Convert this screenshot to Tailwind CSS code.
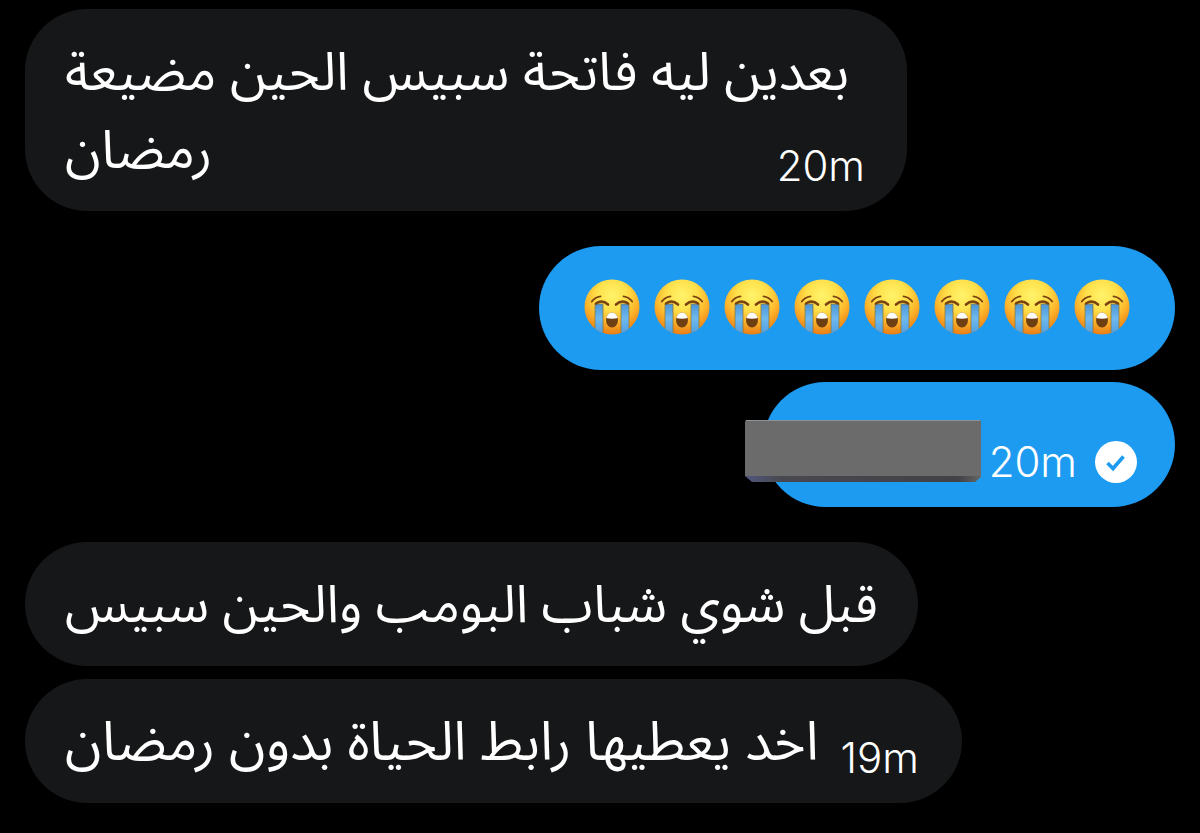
<!DOCTYPE html>
<html lang="ar">
<head>
<meta charset="utf-8">
<meta name="viewport" content="width=device-width, initial-scale=1">
<title>Messages</title>
<script src="https://cdn.jsdelivr.net/npm/@tailwindcss/browser@4"></script>
</head>
<body class="bg-black text-white">
<svg class="absolute size-0" aria-hidden="true">
  <defs>
    <radialGradient id="face" cx="0.5" cy="0.28" r="0.7">
      <stop offset="0" stop-color="#fff36b"/><stop offset="0.4" stop-color="#ffe04a"/><stop offset="0.7" stop-color="#fdb42a"/><stop offset="1" stop-color="#ea8217"/>
    </radialGradient>
    <linearGradient id="tear" x1="0" y1="0" x2="0" y2="1">
      <stop offset="0" stop-color="#4b95d6"/><stop offset="0.45" stop-color="#6fb9ee"/><stop offset="1" stop-color="#4a9ae0"/>
    </linearGradient>
    <clipPath id="round"><circle cx="28" cy="28" r="27.5"/></clipPath>
    <clipPath id="lips"><ellipse cx="28" cy="41" rx="6" ry="7.5"/></clipPath>
    <symbol id="sob" viewBox="0 0 56 56">
      <circle cx="28" cy="28" r="27.5" fill="url(#face)"/>
      <g clip-path="url(#round)" fill="url(#tear)" stroke="#8a7a3c" stroke-width="0.8">
        <path d="M11 25h8v32h-8zM37 25h8v32h-8z"/>
      </g>
      <g fill="none" stroke="#7a4210" stroke-linecap="round">
        <path stroke-width="1.8" d="M7.8 22.5Q11 18 16.5 17.3M48.2 22.5Q45 18 39.5 17.3"/>
        <path stroke-width="2.6" d="M12 24.5Q18 20 24 25.5M44 24.5Q38 20 32 25.5"/>
      </g>
      <ellipse cx="28" cy="41" rx="6" ry="7.5" fill="#6f3f14"/>
      <path clip-path="url(#lips)" fill="#fff" d="M22 33h12v6q-6 1.500-12 0z"/>
    </symbol>
  </defs>
</svg>
<main class="flex flex-col gap-[35px] px-[25px] pt-[9px] font-['Noto_Sans_Arabic',serif] leading-[78px]">
  <article class="w-fit max-w-[882px] rounded-[62px] bg-[#161718] pt-[25px] pr-[42px] pb-[21px] pl-10">
    <p dir="rtl" class="text-left text-[53px]">بعدين ليه فاتحة سبيس الحين مضيعة <time dir="ltr" class="float-right mt-[30px] font-['Inter',sans-serif] text-[42px] leading-[48px] font-light">20m</time>رمضان</p>
  </article>

  <section class="flex flex-col items-end gap-3">
    <article class="flex h-[124px] items-center gap-[14px] rounded-full bg-[#1d9bf0] px-[45px] pb-0.5" role="img" aria-label="😭😭😭😭😭😭😭😭">
      <svg class="size-14"><use href="#sob"/></svg>
      <svg class="size-14"><use href="#sob"/></svg>
      <svg class="size-14"><use href="#sob"/></svg>
      <svg class="size-14"><use href="#sob"/></svg>
      <svg class="size-14"><use href="#sob"/></svg>
      <svg class="size-14"><use href="#sob"/></svg>
      <svg class="size-14"><use href="#sob"/></svg>
      <svg class="size-14"><use href="#sob"/></svg>
    </article>
    <article class="relative flex items-center gap-[18px] rounded-full bg-[#1d9bf0] pt-14 pr-[38px] pb-[21px] pl-[226px]">
      <svg class="absolute top-[38px] -left-5 h-[63px] w-[238px]" viewBox="0 0 238 63" aria-hidden="true">
        <defs><linearGradient id="edge"><stop offset="0" stop-color="#515780"/><stop offset="0.15" stop-color="#48494f"/><stop offset="0.9" stop-color="#414146"/><stop offset="1" stop-color="#666"/></linearGradient></defs>
        <path fill="url(#edge)" d="M2 55h236v2l-6 5H9l-7-6z"/>
        <path fill="#6b6b6b" d="M2 2Q2 0 4 0H236Q238 0 238 2V56H2z"/>
        <path fill="#8c9399" d="M3 0h234v1H3z"/>
      </svg>
      <time class="font-['Inter',sans-serif] text-[42px] leading-[48px] font-light">20m</time>
      <svg class="size-[42px]" viewBox="0 0 42 42" role="img" aria-label="Sent"><circle cx="21" cy="21" r="21" fill="#fff"/><path d="M12.500 22l5.500 5.500 10.500-12" fill="none" stroke="#1d9bf0" stroke-width="3.600"/></svg>
    </article>
  </section>

  <section class="flex flex-col items-start gap-[13px]">
    <article class="rounded-[62px] bg-[#161718] px-10 pt-[25px] pb-[21px]">
      <p dir="rtl" class="text-[52px]">قبل شوي شباب البومب والحين سبيس</p>
    </article>
    <article class="flex items-end gap-[22px] rounded-[62px] bg-[#161718] pt-[25px] pr-[43px] pb-[21px] pl-10">
      <p dir="rtl" class="text-[54px]">اخد يعطيها رابط الحياة بدون رمضان</p>
      <time class="font-['Inter',sans-serif] text-[42px] leading-[48px] font-light">19m</time>
    </article>
  </section>
</main>
</body>
</html>
